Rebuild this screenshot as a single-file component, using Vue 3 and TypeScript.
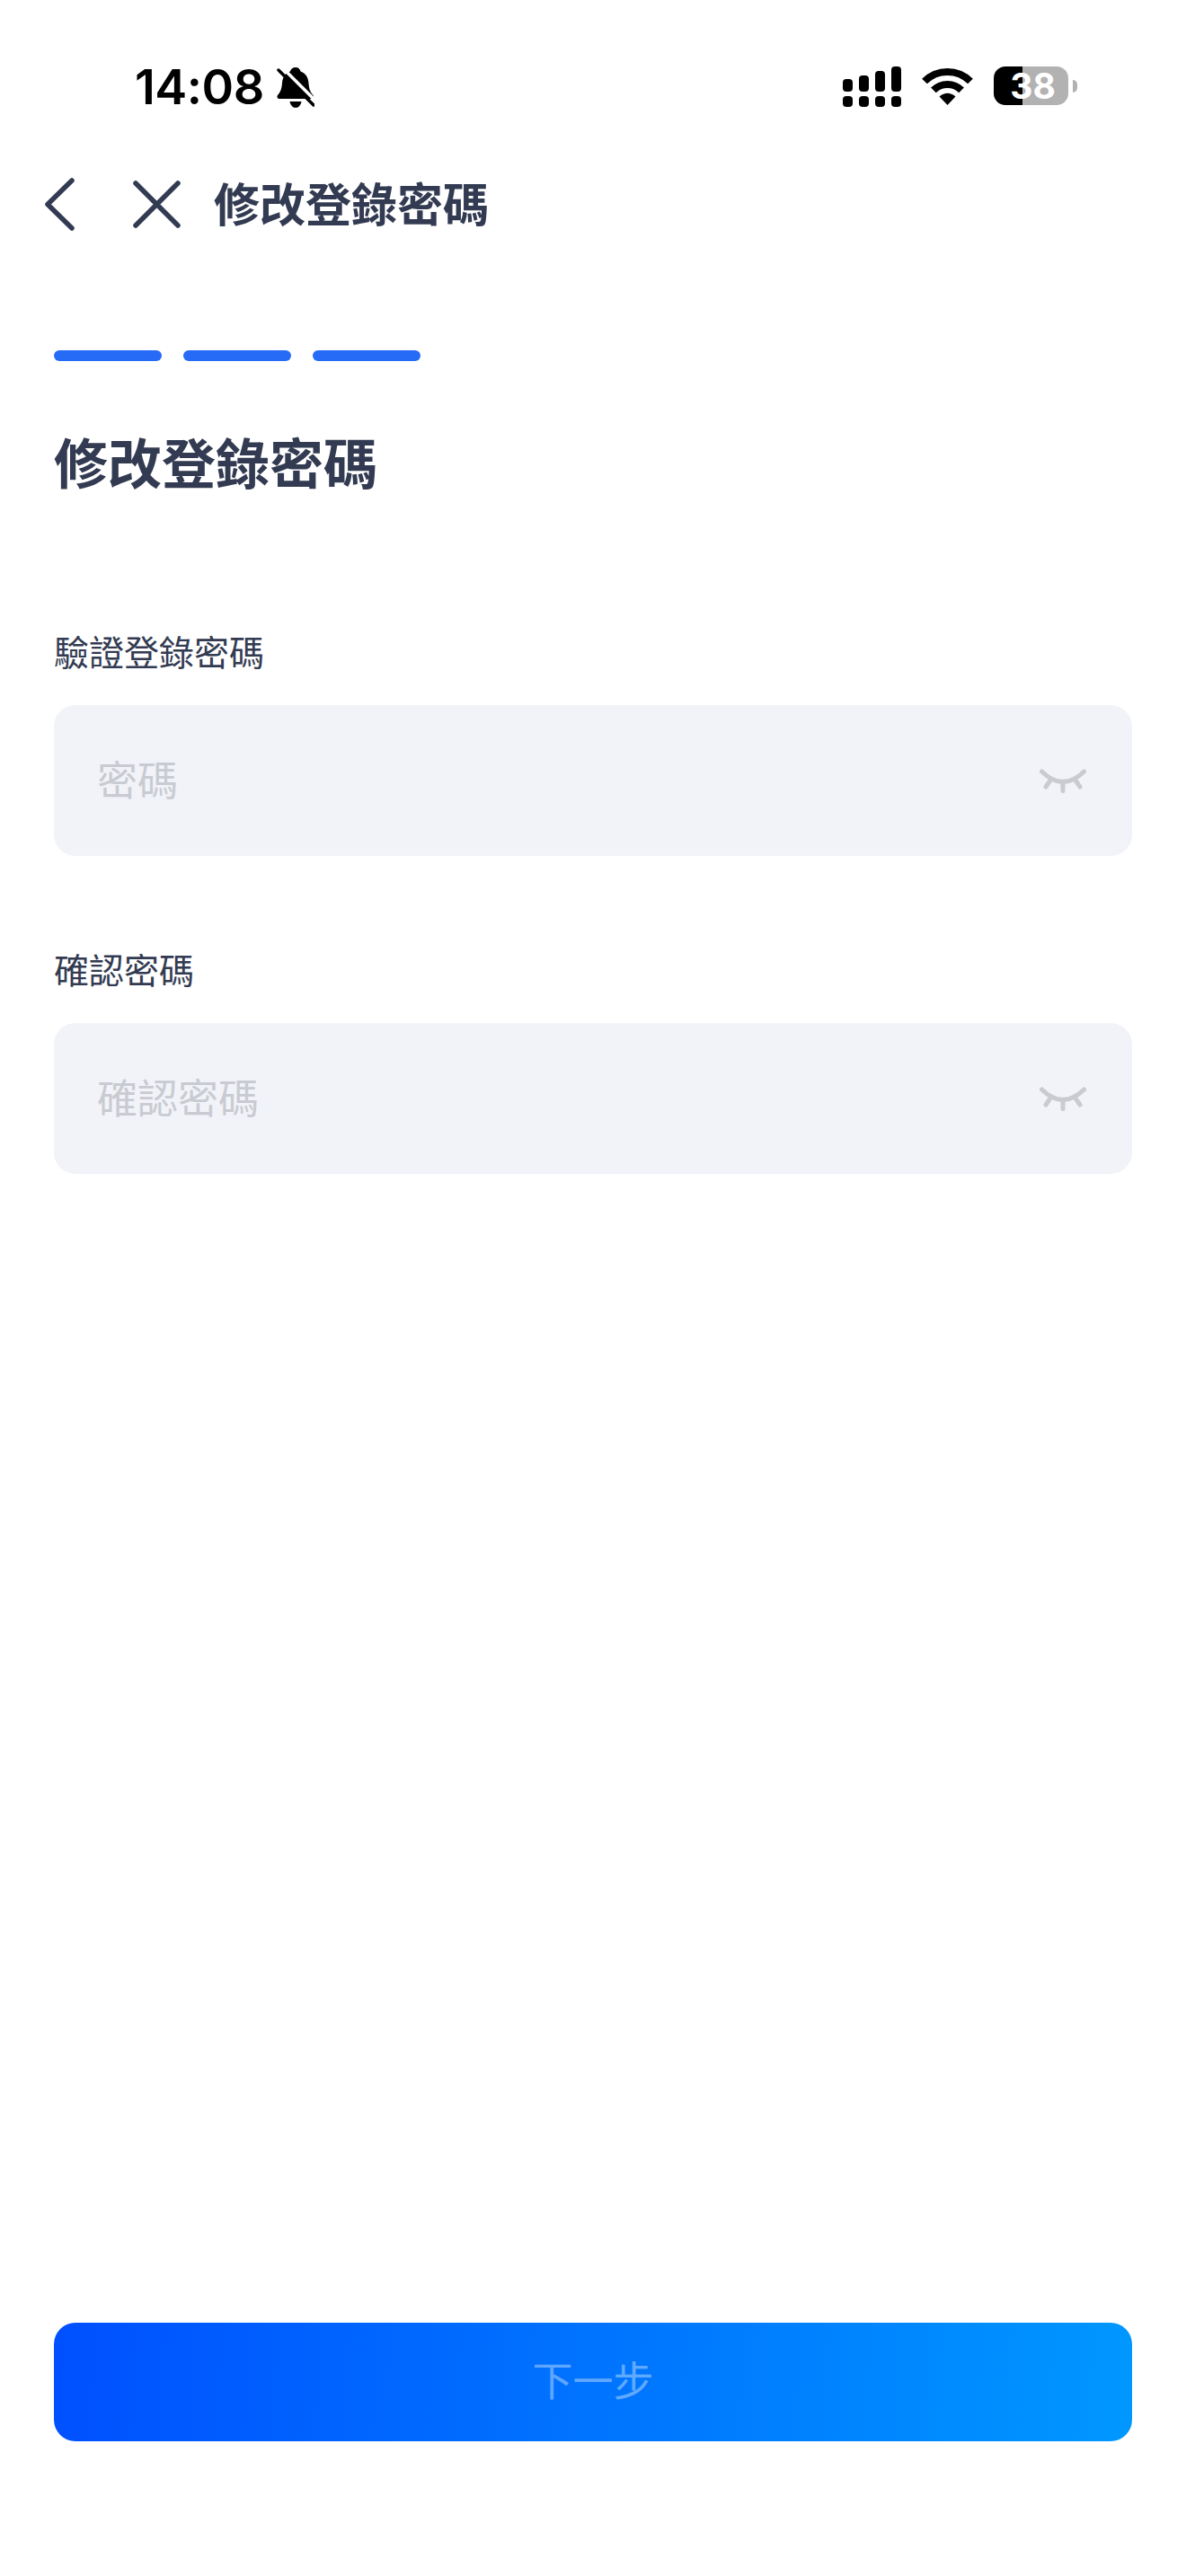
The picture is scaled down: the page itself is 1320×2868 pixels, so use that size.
<script setup lang="ts">
interface Field {
  label: string
  placeholder: string
}

const fields: Field[] = [
  { label: '驗證登錄密碼', placeholder: '密碼' },
  { label: '確認密碼', placeholder: '確認密碼' },
]

// signal icon: x position and top of each upper bar
const signalBars = [
  { x: 0, y: 14 },
  { x: 18, y: 10 },
  { x: 36, y: 5 },
  { x: 54, y: 0 },
]
</script>

<template>
  <div class="page">
    <div class="status-bar">
      <span class="time">14:08</span>
      <svg class="bell" width="42" height="46" viewBox="0 0 42 46">
        <path d="M21 0c3 0 5 2 5.500 4.500c6 2 8.500 7 9 13c.4 7 2 10 5 13.500c1 1.500.5 4-2 4H3c-2.500 0-3-2.500-2-4c3-3.500 4.500-6.500 5-13.500c.5-6 3-11 9-13C15.500 2 18 0 21 0Z" />
        <path d="M14.500 38h13c-.5 3.500-3 7-6.500 7s-6-3.500-6.500-7Z" />
        <line class="bell-gap" x1="5" y1="-1" x2="46" y2="40" />
        <line class="bell-slash" x1="2" y1="3" x2="41" y2="42" />
      </svg>
      <div class="status-icons">
        <svg width="65" height="45" viewBox="0 0 65 45">
          <template v-for="bar in signalBars" :key="bar.x">
            <rect :x="bar.x" :y="bar.y" width="11" :height="28 - bar.y" rx="4" />
            <rect :x="bar.x" y="33" width="11" height="12" rx="4" />
          </template>
        </svg>
        <svg class="wifi" width="57" height="42" viewBox="0 0 57 42">
          <path d="M3 15.500a36 36 0 0 1 51 0" />
          <path d="M12.900 25.400a22 22 0 0 1 31.200 0" />
          <path class="wifi-dot" d="M28.500 42L19.500 32.500Q28.500 25 37.500 32.500Z" />
        </svg>
        <div class="battery">
          <div class="battery-body">38</div>
          <div class="battery-cap"></div>
        </div>
      </div>
    </div>

    <div class="nav">
      <svg class="nav-back" width="33" height="59" viewBox="0 0 33 59">
        <path d="M30 3L3 29.500L30 56" />
      </svg>
      <svg class="nav-close" width="53" height="53" viewBox="0 0 53 53">
        <path d="M3 3L50 50M50 3L3 50" />
      </svg>
      <span class="nav-title">修改登錄密碼</span>
    </div>

    <main class="content">
      <div class="steps">
        <span v-for="n in 3" :key="n" class="step"></span>
      </div>
      <h1 class="title">修改登錄密碼</h1>

      <div v-for="field in fields" :key="field.label" class="field">
        <div class="field-label">{{ field.label }}</div>
        <div class="field-box">
          <span class="placeholder">{{ field.placeholder }}</span>
          <svg class="eye" width="54" height="28" viewBox="0 0 54 28">
            <path d="M2.500 4Q26 27 49.500 4M11.500 14.500L7 21M26 17V25.500M40.500 14.500L45 21" />
          </svg>
        </div>
      </div>

      <button class="next" type="button">下一步</button>
    </main>
  </div>
</template>

<style>
html,
body {
  background: #fff;
}
</style>

<style scoped>
.page {
  display: flex;
  flex-direction: column;
  width: 1320px;
  height: 2868px;
  background: #fff;
  color: #333b52;
  font-family: "Noto Sans CJK TC", "Noto Sans", sans-serif;
}

/* Status bar */
.status-bar {
  display: flex;
  align-items: flex-start;
  height: 177px;
  padding: 74px 121px 0 150px;
  box-sizing: border-box;
  color: #000;
}

.time {
  font-family: Inter, sans-serif;
  font-size: 54px;
  font-weight: 600;
  line-height: 46px;
  letter-spacing: -0.5px;
}

.bell {
  margin: 1px 0 0 14px;
  fill: #000;
}

.bell-gap {
  stroke: #fff;
  stroke-width: 3.5;
}

.bell-slash {
  stroke: #000;
  stroke-width: 3.5;
  stroke-linecap: round;
}

.status-icons {
  display: flex;
  align-items: flex-start;
  gap: 23px;
  margin-left: auto;
}

.wifi {
  margin-top: 1px;
  fill: none;
  stroke: #000;
  stroke-width: 8;
}

.wifi-dot {
  fill: #000;
  stroke: none;
}

.battery {
  display: flex;
  align-items: center;
  gap: 5px;
}

.battery-body {
  width: 83px;
  height: 43px;
  padding-left: 4px;
  border-radius: 13px;
  background: linear-gradient(to right, #000 32px, #b2b2b2 32px);
  box-sizing: border-box;
  color: #fff;
  font-family: Inter, sans-serif;
  font-size: 39px;
  font-weight: 700;
  line-height: 43px;
  text-align: center;
}

.battery-cap {
  width: 5px;
  height: 14px;
  border-radius: 0 7px 7px 0;
  background: #b2b2b2;
}

/* Nav */
.nav {
  display: flex;
  align-items: center;
  height: 100px;
  padding-left: 50px;
}

.nav svg {
  fill: none;
  stroke: #333b52;
  stroke-width: 5.5;
  stroke-linecap: round;
  stroke-linejoin: round;
}

.nav-close {
  margin-left: 65px;
}

.nav-title {
  margin: 0 0 4px 37px;
  font-size: 51px;
  font-weight: 700;
  line-height: 70px;
}

/* Content */
.content {
  display: flex;
  flex: 1;
  flex-direction: column;
  padding: 113px 60px 150px;
}

.steps {
  display: flex;
  gap: 24px;
}

.step {
  width: 120px;
  height: 12px;
  border-radius: 6px;
  background: #266bf6;
}

.title {
  margin: 69px 0 44px;
  font-size: 60px;
  font-weight: 700;
  line-height: 84px;
}

.field {
  margin-top: 98px;
}

.field-label {
  font-size: 39px;
  font-weight: 400;
  line-height: 54px;
}

.field-box {
  display: flex;
  align-items: center;
  justify-content: space-between;
  height: 168px;
  margin-top: 34px;
  padding: 0 49px 0 48px;
  border-radius: 24px;
  background: #f2f3f8;
  box-sizing: border-box;
}

.placeholder {
  margin-bottom: 5px;
  color: #c9cbd2;
  font-size: 45px;
}

.eye {
  fill: none;
  stroke: #cacbd0;
  stroke-width: 5;
  stroke-linecap: round;
}

.next {
  height: 132px;
  margin-top: auto;
  padding-bottom: 8px;
  border: none;
  border-radius: 24px;
  background: linear-gradient(93deg, #0050ff, #0097ff);
  color: rgba(255, 255, 255, 0.4);
  font-family: inherit;
  font-size: 45px;
  font-weight: 400;
}
</style>
